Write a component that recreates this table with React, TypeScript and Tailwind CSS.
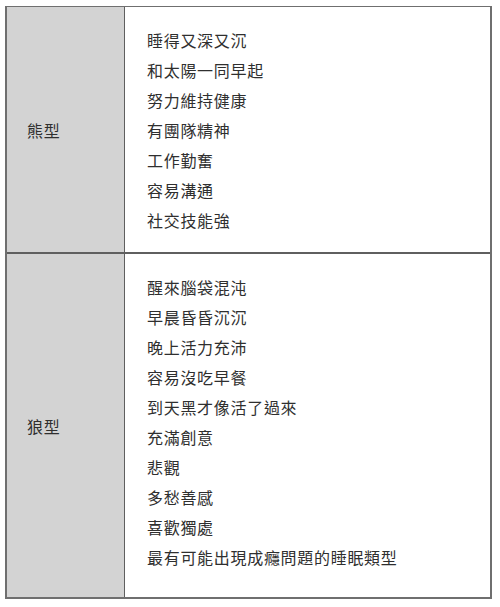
import React from 'react';

const rows = [
  {
    label: '熊型',
    traits: ['睡得又深又沉', '和太陽一同早起', '努力維持健康', '有團隊精神', '工作勤奮', '容易溝通', '社交技能強'],
    pad: 'pt-[18px] pb-[17px]',
  },
  {
    label: '狼型',
    traits: [
      '醒來腦袋混沌',
      '早晨昏昏沉沉',
      '晚上活力充沛',
      '容易沒吃早餐',
      '到天黑才像活了過來',
      '充滿創意',
      '悲觀',
      '多愁善感',
      '喜歡獨處',
      '最有可能出現成癮問題的睡眠類型',
    ],
    pad: 'pt-[18px] pb-[25px]',
  },
];

export default function App() {
  return (
    <div
      className="w-[500px] h-[607px] bg-white pt-[6px] pl-[5px] text-[#2f2f2f]"
      style={{ fontFamily: '"Noto Sans CJK TC", "Noto Sans", sans-serif' }}
    >
      <div className="w-[487px] border-t border-r-2 border-b-2 border-l-2 border-[#6f6f6f]">
        {rows.map((row, i) => (
          <div key={row.label} className={`flex ${i > 0 ? 'border-t-2 border-[#5f5f5f]' : ''}`}>
            {/* label column */}
            <div className="w-[118px] shrink-0 bg-[#d3d3d3] border-r border-[#5f5f5f] flex items-center pl-[20px]">
              <span className="text-[16px] tracking-[0.7px] leading-[30px]">{row.label}</span>
            </div>
            {/* traits */}
            <div className={`flex-1 pl-[22px] ${row.pad}`}>
              {row.traits.map((t) => (
                <div key={t} className="text-[16px] tracking-[0.7px] leading-[30px]">
                  {t}
                </div>
              ))}
            </div>
          </div>
        ))}
      </div>
    </div>
  );
}
